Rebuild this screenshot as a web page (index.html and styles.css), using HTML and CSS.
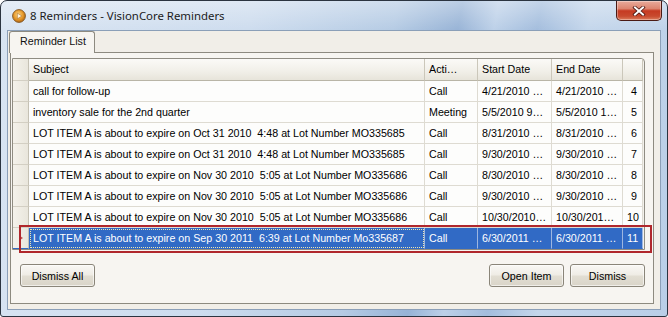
FILE: index.html
```html
<!DOCTYPE html>
<html lang="en">
<head>
  <meta charset="UTF-8">
  <title>8 Reminders - VisionCore Reminders</title>
  <link rel="stylesheet" href="styles.css">
</head>
<body>
  <div class="window">
    <div class="titlebar">
      <svg class="app-icon" width="14" height="14" viewBox="0 0 14 14">
        <defs>
          <radialGradient id="orb" cx="0.45" cy="0.4" r="0.6">
            <stop offset="0" stop-color="#fbd58a"/>
            <stop offset="0.6" stop-color="#e69a2c"/>
            <stop offset="1" stop-color="#b86a12"/>
          </radialGradient>
        </defs>
        <circle cx="7" cy="7" r="6.4" fill="url(#orb)" stroke="#7d5424" stroke-width="0.9"/>
        <path d="M5.4 4.2 L9.8 7 L5.4 9.8 Z" fill="#fff6e2" stroke="#a2641a" stroke-width="0.5"/>
      </svg>
      <span class="title">8 Reminders - VisionCore Reminders</span>
      <button class="close-btn">
        <svg width="14" height="10" viewBox="0 0 14 10">
          <path d="M3 1.5 L11 8.5 M11 1.5 L3 8.5" stroke="#4a1510" stroke-width="3.6" stroke-linecap="square"/>
          <path d="M3 1.5 L11 8.5 M11 1.5 L3 8.5" stroke="#ffffff" stroke-width="2" stroke-linecap="square"/>
        </svg>
      </button>
    </div>

    <div class="client">
      <div class="tabs">
        <span class="tab">Reminder List</span>
      </div>
      <div class="tab-panel">
        <div class="grid-box">
          <table class="grid">
            <colgroup>
              <col class="c-row">
              <col class="c-subject">
              <col class="c-action">
              <col class="c-start">
              <col class="c-end">
              <col class="c-num">
            </colgroup>
            <thead>
              <tr>
                <th class="row-head"></th>
                <th>Subject</th>
                <th>Acti…</th>
                <th>Start Date</th>
                <th>End Date</th>
                <th class="last"></th>
              </tr>
            </thead>
            <tbody>
              <tr>
                <td class="row-head"></td>
                <td>call for follow-up</td>
                <td>Call</td>
                <td>4/21/2010 …</td>
                <td>4/21/2010 …</td>
                <td class="num">4</td>
              </tr>
              <tr>
                <td class="row-head"></td>
                <td>inventory sale for the 2nd quarter</td>
                <td>Meeting</td>
                <td>5/5/2010 9…</td>
                <td>5/5/2010 1…</td>
                <td class="num">5</td>
              </tr>
              <tr>
                <td class="row-head"></td>
                <td>LOT ITEM A is about to expire on Oct 31 2010  4:48 at Lot Number MO335685</td>
                <td>Call</td>
                <td>8/31/2010 …</td>
                <td>8/31/2010 …</td>
                <td class="num">6</td>
              </tr>
              <tr>
                <td class="row-head"></td>
                <td>LOT ITEM A is about to expire on Oct 31 2010  4:48 at Lot Number MO335685</td>
                <td>Call</td>
                <td>9/30/2010 …</td>
                <td>9/30/2010 …</td>
                <td class="num">7</td>
              </tr>
              <tr>
                <td class="row-head"></td>
                <td>LOT ITEM A is about to expire on Nov 30 2010  5:05 at Lot Number MO335686</td>
                <td>Call</td>
                <td>8/30/2010 …</td>
                <td>8/30/2010 …</td>
                <td class="num">8</td>
              </tr>
              <tr>
                <td class="row-head"></td>
                <td>LOT ITEM A is about to expire on Nov 30 2010  5:05 at Lot Number MO335686</td>
                <td>Call</td>
                <td>9/30/2010 …</td>
                <td>9/30/2010 …</td>
                <td class="num">9</td>
              </tr>
              <tr>
                <td class="row-head"></td>
                <td>LOT ITEM A is about to expire on Nov 30 2010  5:05 at Lot Number MO335686</td>
                <td>Call</td>
                <td>10/30/2010…</td>
                <td>10/30/201…</td>
                <td class="num">10</td>
              </tr>
              <tr class="selected">
                <td class="row-head"><span class="row-mark"></span></td>
                <td class="focus">LOT ITEM A is about to expire on Sep 30 2011  6:39 at Lot Number Mo335687</td>
                <td>Call</td>
                <td>6/30/2011 …</td>
                <td>6/30/2011 …</td>
                <td class="num">11</td>
              </tr>
            </tbody>
          </table>
        </div>

        <div class="actions">
          <button class="btn">Dismiss All</button>
          <span class="spacer"></span>
          <button class="btn">Open Item</button>
          <button class="btn">Dismiss</button>
        </div>
      </div>
    </div>

    <div class="highlight"></div>
  </div>
</body>
</html>
```

FILE: styles.css
```css
* {
  box-sizing: border-box;
}
body {
  margin: 0;
  padding: 0;
  background-color: #ffffff;
  font-family: "Liberation Sans", Arial, sans-serif;
}
.window {
  position: relative;
  width: 668px;
  height: 317px;
  display: flex;
  flex-direction: column;
  padding: 0 6px 6px 6px;
  border: 1px solid #2b3440;
  border-radius: 7px 7px 3px 3px;
  background:
    linear-gradient(180deg, rgba(255,255,255,0.35) 0%, rgba(255,255,255,0) 30px),
    linear-gradient(100deg, #d8e4f2 0%, #cddcee 35%, #b5cbe4 55%, #97b3d6 64%, #bcd0e8 69%, #a3bddd 75%, #c4d6eb 82%, #b9cee7 100%);
}

/* title bar */
.titlebar {
  height: 29px;
  display: flex;
  align-items: center;
}
.app-icon {
  margin-left: 5px;
  margin-top: 1px;
  flex: none;
}
.title {
  margin-left: 4px;
  font-family: "Noto Sans", "Open Sans", sans-serif;
  font-size: 11.4px;
  color: #1b1b1b;
  flex: 1;
}
.close-btn {
  align-self: flex-start;
  width: 46px;
  height: 20px;
  margin-right: -1px;
  padding: 0;
  border: 1px solid #4a1a14;
  border-top: none;
  border-radius: 0 0 5px 5px;
  background: linear-gradient(180deg, #e9ab9c 0%, #dd8570 40%, #c63a22 52%, #c84a2f 80%, #dd7d5c 100%);
  box-shadow: inset 0 0 0 1px rgba(255,255,255,0.35);
  display: flex;
  align-items: center;
  justify-content: center;
}

/* client area */
.client {
  flex: 1;
  display: flex;
  flex-direction: column;
  padding: 0 6px 5px 2px;
  border: 1px solid #8b9fb8;
  background-color: #f1eee8;
}
.tabs {
  display: flex;
  height: 21px;
  position: relative;
  z-index: 1;
}
.tab {
  margin-left: -1px;
  height: 22px;
  padding: 3px 8px 0 10px;
  border: 1px solid #8d8a80;
  border-bottom: none;
  border-radius: 3px 3px 0 0;
  background-color: #f7f5f1;
  font-size: 10.7px;
  color: #111;
}
.tab-panel {
  flex: 1;
  display: flex;
  flex-direction: column;
  padding: 5px 8px 16px 1px;
  border: 1px solid #8d8a80;
  background-color: #f7f5f1;
}

/* grid */
.grid-box {
  height: 192px;
  border: 1px solid #8f8c82;
  border-radius: 0 4px 0 0;
  background-color: #f3f1ec;
  overflow: hidden;
}
.grid {
  border-collapse: separate;
  border-spacing: 0;
  table-layout: fixed;
  width: 630px;
  font-size: 10.7px;
  color: #000;
}
.c-row { width: 16px; }
.c-subject { width: 396px; }
.c-action { width: 53px; }
.c-start { width: 74px; }
.c-end { width: 71px; }
.c-num { width: 20px; }

.grid th,
.grid td {
  padding: 0 4px;
  white-space: pre;
  overflow: hidden;
  text-align: left;
  font-weight: normal;
  border-right: 1px solid #dedbd2;
  border-bottom: 1px solid #dedbd2;
}
.grid th {
  height: 22px;
  line-height: 21px;
  background: linear-gradient(180deg, #fbfaf7 0%, #f1efe8 60%, #e7e4da 100%);
  border-right-color: #cbc7ba;
  border-bottom-color: #b9b5a7;
}
.grid td {
  height: 21px;
  line-height: 20px;
  background-color: #fdfdfc;
}
.grid .row-head {
  padding: 0;
  background: linear-gradient(90deg, #f4f2eb 0%, #e9e6dc 100%);
  border-right-color: #c5c1b4;
  border-bottom-color: #d3cfc3;
}
.grid td.num {
  text-align: right;
  padding-right: 5px;
}
.grid tr.selected td {
  background-color: #316ac5;
  color: #ffffff;
  border-right-color: #9db6e0;
  border-bottom-color: #316ac5;
}
.grid tr.selected td.row-head {
  background: linear-gradient(90deg, #f4f2eb 0%, #e9e6dc 100%);
  border-right-color: #c5c1b4;
  position: relative;
}
.grid tr.selected td.focus {
  outline: 1px dotted #f0e6b0;
  outline-offset: -2px;
}
.row-mark {
  position: absolute;
  left: 7px;
  top: 8px;
  width: 0;
  height: 0;
  border-top: 2px solid transparent;
  border-bottom: 2px solid transparent;
  border-left: 3px solid #c0504d;
}

/* buttons */
.actions {
  margin-top: auto;
  display: flex;
  gap: 6px;
  padding-left: 8px;
  padding-right: 0;
}
.spacer {
  flex: 1;
}
.btn {
  width: 75px;
  height: 23px;
  padding: 0;
  border: 1px solid #8a8579;
  border-radius: 3px;
  background: linear-gradient(180deg, #f9f8f5 0%, #efece5 48%, #e2ded3 52%, #d9d4c8 100%);
  box-shadow: inset 0 0 0 1px rgba(255,255,255,0.6);
  font-family: "Liberation Sans", Arial, sans-serif;
  font-size: 10.7px;
  color: #000;
}

/* annotation box around the selected reminder */
.highlight {
  position: absolute;
  left: 18px;
  top: 224px;
  width: 633px;
  height: 28px;
  border: 2px solid #b0272c;
}
```
